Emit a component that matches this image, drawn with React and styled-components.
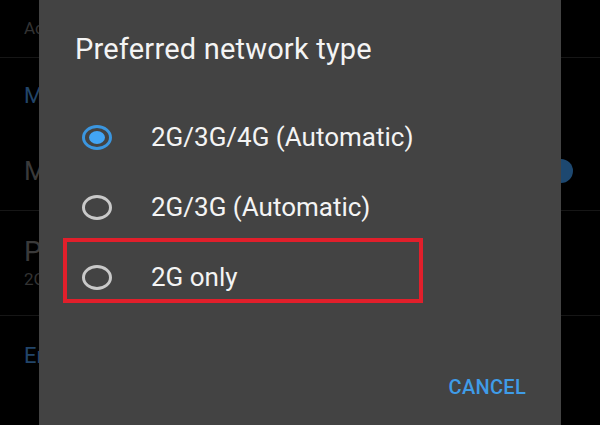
import React from "react";
import styled, { createGlobalStyle } from "styled-components";

const GlobalStyle = createGlobalStyle`
	html, body {
		margin: 0;
		padding: 0;
		background: #000;
	}
	body {
		font-family: Roboto, "Noto Sans", sans-serif;
		-webkit-font-smoothing: antialiased;
	}
`;

const Screen = styled.div`
	position: relative;
	width: 600px;
	height: 425px;
	overflow: hidden;
	background: #000;
`;

/* settings list that sits dimmed behind the dialog */
const SettingsList = styled.div`
	display: flex;
	flex-direction: column;
`;

const SettingItem = styled.div`
	display: flex;
	flex-direction: column;
	justify-content: center;
	height: ${(p) => p.$height}px;
	padding-left: 24px;
	border-bottom: ${(p) => (p.$divider ? "1px solid #161616" : "none")};
	box-sizing: border-box;
`;

/* only the first letters peek out beside the dialog */
const SettingTitle = styled.div`
	width: 15px;
	overflow: hidden;
	white-space: nowrap;
	font-size: ${(p) => p.$size || 26}px;
	line-height: 1.15;
	color: ${(p) => (p.$accent ? "#22456a" : "#3a3a3a")};
`;

const SettingSub = styled.div`
	width: 15px;
	overflow: hidden;
	white-space: nowrap;
	font-size: 17px;
	line-height: 1.3;
	color: #333;
`;

const SwitchKnob = styled.div`
	position: absolute;
	left: 549px;
	top: 159px;
	width: 24px;
	height: 24px;
	border-radius: 50%;
	background: #1d4870;
`;

const Dialog = styled.div`
	position: absolute;
	top: 0;
	left: 39px;
	width: 522px;
	height: 425px;
	background: #434343;
	display: flex;
	flex-direction: column;
	box-sizing: border-box;
	padding-top: 31px;
`;

const DialogTitle = styled.h2`
	margin: 0 0 35px 36px;
	font-size: 29px;
	font-weight: 400;
	line-height: 36px;
	color: #f4f4f4;
	letter-spacing: 0.2px;
`;

const OptionList = styled.div`
	display: flex;
	flex-direction: column;
`;

const OptionRow = styled.div`
	position: relative;
	display: flex;
	align-items: center;
	height: 70px;
	padding-left: 43px;

	${(p) =>
		p.$highlight &&
		`
		&::after {
			content: "";
			position: absolute;
			left: 24px;
			top: -4px;
			width: 360px;
			height: 65px;
			box-sizing: border-box;
			border: 4px solid #e11f2b;
		}
	`}
`;

const Radio = styled.span`
	flex: none;
	box-sizing: border-box;
	width: 30px;
	height: 25px;
	border-radius: 50%;
	border: 3px solid ${(p) => (p.$checked ? "#3b96df" : "#c9c9c9")};
	display: flex;
	align-items: center;
	justify-content: center;

	&::before {
		content: "";
		display: ${(p) => (p.$checked ? "block" : "none")};
		width: 16px;
		height: 13px;
		border-radius: 50%;
		background: #42a5f5;
	}
`;

const OptionLabel = styled.span`
	margin-left: 39px;
	font-size: 26px;
	line-height: 70px;
	color: #f4f4f4;
`;

const Actions = styled.div`
	margin-top: auto;
	display: flex;
	justify-content: flex-end;
	padding: 0 35px 26px 0;
`;

const TextButton = styled.button`
	background: none;
	border: none;
	padding: 0;
	font-family: inherit;
	font-size: 20px;
	font-weight: 500;
	line-height: 24px;
	color: #3f9ce8;
	letter-spacing: 0.3px;
`;

const options = [
	{ label: "2G/3G/4G (Automatic)", checked: true },
	{ label: "2G/3G (Automatic)" },
	{ label: "2G only", highlight: true },
];

function App() {
	return (
		<Screen>
			<GlobalStyle />
			<SettingsList>
				<SettingItem $height={58} $divider>
					<SettingSub>Access Point Names</SettingSub>
				</SettingItem>
				<SettingItem $height={76}>
					<SettingTitle $accent $size={22}>
						Mobile network
					</SettingTitle>
				</SettingItem>
				<SettingItem $height={77} $divider>
					<SettingTitle>Mobile data</SettingTitle>
				</SettingItem>
				<SettingItem $height={105} $divider>
					<SettingTitle $size={28}>Preferred network type</SettingTitle>
					<SettingSub>2G/3G/4G (Automatic)</SettingSub>
				</SettingItem>
				<SettingItem $height={80}>
					<SettingTitle $accent $size={22}>
						Enhanced
					</SettingTitle>
				</SettingItem>
			</SettingsList>
			<SwitchKnob />

			<Dialog>
				<DialogTitle>Preferred network type</DialogTitle>
				<OptionList>
					{options.map((o) => (
						<OptionRow key={o.label} $highlight={o.highlight}>
							<Radio $checked={o.checked} />
							<OptionLabel>{o.label}</OptionLabel>
						</OptionRow>
					))}
				</OptionList>
				<Actions>
					<TextButton>CANCEL</TextButton>
				</Actions>
			</Dialog>
		</Screen>
	);
}

export default App;
